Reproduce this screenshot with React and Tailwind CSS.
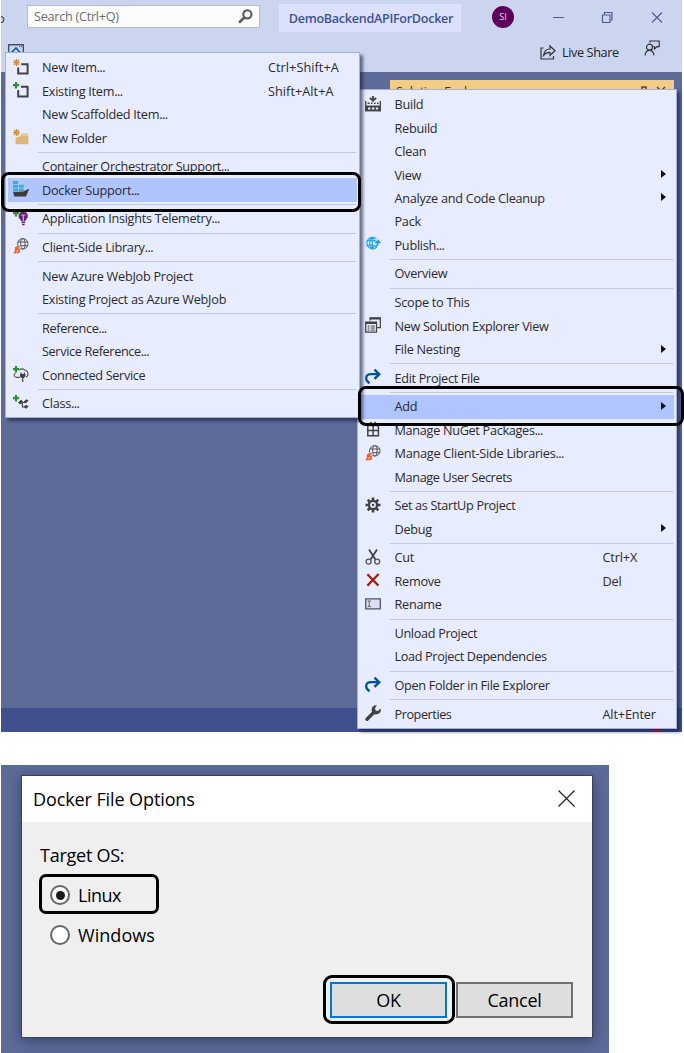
import React from "react";

const Svg = ({ children, className = "w-4 h-4" }) => (
  <svg viewBox="0 0 16 16" className={className} fill="none">{children}</svg>
);

const Spark = () => (
  <g>
    <path d="M3.5 0v7M0 3.5h7M1 1l5 5M6 1L1 6" stroke="#c98a3a" strokeWidth="1.1" />
    <circle cx="3.5" cy="3.5" r="2.1" fill="#d9922e" />
  </g>
);
const Plus = () => <path d="M3 0v6.4M-.2 3.2h6.4" stroke="#2f8f2f" strokeWidth="2.2" />;

const Globe = ({ stroke = "#555" }) => (
  <g stroke={stroke} strokeWidth="1">
    <circle cx="9.8" cy="5.8" r="5.2" />
    <ellipse cx="9.8" cy="5.8" rx="2.2" ry="5.2" />
    <path d="M4.8 4h10M4.8 7.7h10" />
  </g>
);

const icons = {
  newItem: <Svg><Spark /><path d="M8.2 5.2H14.6V14.6H5.2V8.4" stroke="#424242" strokeWidth="2" /></Svg>,
  existing: <Svg><Plus /><path d="M8 4.8H14.6V14.4H5.2V8" stroke="#424242" strokeWidth="2" /></Svg>,
  folder: <Svg><path d="M2.600 15.200V8.600L7 7.600 9 4.600h5.200l1.200 2v8.600z" fill="#dcb67a" /><path d="M9.500 6h5" stroke="#f2dfbe" strokeWidth="1" /><Spark /></Svg>,
  docker: (
    <Svg>
      <path d="M0 0h5v3H0zM0 3.700h5v3H0zM5.700 3.700h5v3h-5zM0 7.400h5v3H0zM5.700 7.400h5v2.500l-5 .5z" fill="#3aaed0" />
      <path d="M0 11.200L10 10.400 16.300 7.600 13 15.600H1.400z" fill="#3b3b3b" />
    </Svg>
  ),
  insights: (
    <Svg>
      <path d="M10.200 1.400a4.700 4.700 0 0 1 2.800 8.400l-.9 1.600H8.400l-.9-1.600a4.700 4.700 0 0 1 2.700-8.400z" fill="#68217a" />
      <path d="M8.600 12.600h3.400M9 14.600h2.600" stroke="#68217a" strokeWidth="1.300" />
      <path d="M10.300 11V6.400M8.400 5.500a1 1 0 1 1 1.900.9 1 1 0 1 1 1.900-.9" stroke="#e9d8ee" strokeWidth=".9" />
      <Plus />
    </Svg>
  ),
  clientLib: (
    <Svg>
      <Globe />
      <path d="M0 7h7.400v8.400H0z" fill="#e8ecff" />
      <path d="M.8 14.400l2 .1V9M6.800 8.500l-2.200.2-.1 2.300 1.700.5-.2 2.600-2 .4" stroke="#f0602a" strokeWidth="1.800" />
    </Svg>
  ),
  connected: (
    <Svg>
      <path d="M6.300 4.200A4 4 0 0 1 11.600 4a4 4 0 0 1 3.300 4 2.800 2.800 0 0 1-2 3M2.600 7C.8 7.500.4 11 3.500 11.400H7" stroke="#555" strokeWidth="1.100" />
      <path d="M8 6.400v2M11.400 6.400v2M9.700 11.500V16" stroke="#424242" strokeWidth="1.200" />
      <path d="M7 8h5.400v2.400L10.700 12H8.600L7 10.400z" fill="#424242" />
      <Plus />
    </Svg>
  ),
  classIcon: (
    <Svg>
      <path d="M5 7.600l3-2.800 2.200 1.600-3 3zM10.800 6.400l2.600-2.200 2.200 1.400-2.600 2.600zM10.600 11.800l2.600-2 2.400 1.600-2.600 2.400z" fill="#424242" />
      <path d="M8 8l4.600-.6M9.400 8v4h3" stroke="#424242" strokeWidth="1.200" />
      <Plus />
    </Svg>
  ),
  build: (
    <Svg>
      <path d="M8 0v4M4.800 1.900L8 4.700l3.200-2.800" stroke="#424242" strokeWidth="1.800" />
      <path d="M.7 5v10.400M15.300 5v10.400" stroke="#424242" strokeWidth="1.300" />
      <path d="M2.600 7.300h2M6 7.300h1.600M9 7.300h1.600M12 7.300h1.600" stroke="#424242" strokeWidth="1.500" />
      <path d="M1 9.500h14v5.900H1z" fill="#424242" />
      <path d="M3 11.400h2.400v2H3zM6.900 11.400h2.400v2H6.900zM10.800 11.400h2.400v2h-2.400z" fill="#e8ecff" />
    </Svg>
  ),
  publish: (
    <Svg>
      <g stroke="#1ba1e2" strokeWidth="1.100">
        <path d="M11.500 2.800A5.800 5.800 0 1 0 11.800 11.200M1.600 4.800h9.500M1.200 9.200h8.500" />
        <path d="M7.200 1.100c-3.400 3-3.400 9 0 11.700M7.200 1.100c1.800 1.500 2.500 3.300 2.600 5.200M7.200 12.800c1-.9 1.700-1.800 2.100-2.800M7.200 1v11.800" />
      </g>
      <path d="M9.800 10.800c2.200-.7 3.200-2.400 3.100-4.700" stroke="#1ba1e2" strokeWidth="1.700" />
      <path d="M9.600 7.200L13 3.200 16.200 7.200z" fill="#1ba1e2" />
    </Svg>
  ),
  windows: (
    <Svg>
      <path d="M5 3.500V.900h10.300v9.800H12" stroke="#424242" strokeWidth="1.200" />
      <path d="M5 1.600h10.300" stroke="#424242" strokeWidth="1.800" />
      <path d="M.7 5.200h10.800v9.900H.7z" stroke="#424242" strokeWidth="1.200" />
      <path d="M.7 6h10.800" stroke="#424242" strokeWidth="2" />
      <path d="M2.600 9h2M5.800 9h4M2.600 11h2M5.800 11h4M2.600 13h2M5.800 13h4" stroke="#424242" strokeWidth="1" />
    </Svg>
  ),
  arrow: (
    <Svg>
      <path d="M4.600 14.200C-.800 11 .600 5.200 6 5.200h7.500" stroke="#00539c" strokeWidth="2.200" />
      <path d="M9.500.600L14.300 5.200 9.500 9.800" stroke="#00539c" strokeWidth="2.400" />
    </Svg>
  ),
  nuget: (
    <Svg>
      <path d="M2.800 4.400h10.600v10.300H2.800zM8.100 4.400v10.300M2.800 9.400h10.600M8 4L5.300 1M8 4l2.700-3" stroke="#424242" strokeWidth="1.500" />
    </Svg>
  ),
  gear: (
    <Svg>
      <path d="M8 .5v15M.5 8h15M2.700 2.700l10.600 10.600M13.300 2.700L2.700 13.300" stroke="#424242" strokeWidth="2.600" />
      <circle cx="8" cy="8" r="4.100" fill="#e8ecff" stroke="#424242" strokeWidth="2.400" />
      <circle cx="8" cy="8" r="1.200" fill="#424242" />
    </Svg>
  ),
  cut: (
    <Svg>
      <path d="M4 .6l6.400 10M12 .6L5.600 10.600" stroke="#424242" strokeWidth="1.800" />
      <circle cx="3.600" cy="12.600" r="2.500" stroke="#555" strokeWidth="1.300" />
      <circle cx="12.200" cy="12.600" r="2.500" stroke="#555" strokeWidth="1.300" />
    </Svg>
  ),
  remove: <Svg><path d="M2.400 2.200l11 11.400M13.600 2L2.400 13.600" stroke="#a1260d" strokeWidth="2.300" /></Svg>,
  rename: (
    <Svg>
      <path d="M.7 2.800h14.600v10H.7z" fill="#dedcf2" stroke="#555" strokeWidth="1.300" />
      <path d="M2.600 5h3.200M2.600 10.600h3.200M4.200 5v5.600" stroke="#555" strokeWidth=".9" />
    </Svg>
  ),
  wrench: (
    <Svg>
      <path d="M2 14.200L9 7.300" stroke="#424242" strokeWidth="3.400" strokeLinecap="round" />
      <path d="M11.800.300a4.600 4.600 0 0 0-4.900 6.200 4.600 4.600 0 0 0 8.700-2.900L12.900 6 10.600 5.400 10 3.200z" fill="#424242" />
    </Svg>
  ),
};

const addMenu = [
  { t: "New Item...", i: "newItem", k: "Ctrl+Shift+A" },
  { t: "Existing Item...", i: "existing", k: "Shift+Alt+A" },
  { t: "New Scaffolded Item..." },
  { t: "New Folder", i: "folder" },
  null,
  { t: "Container Orchestrator Support...", c: "tracking-[-0.32px]" },
  { t: "Docker Support...", i: "docker", on: true },
  null,
  { t: "Application Insights Telemetry...", i: "insights", c: "tracking-[-0.28px]" },
  null,
  { t: "Client-Side Library...", i: "clientLib" },
  null,
  { t: "New Azure WebJob Project" },
  { t: "Existing Project as Azure WebJob" },
  null,
  { t: "Reference...", c: "tracking-[-0.36px]" },
  { t: "Service Reference...", c: "tracking-[-0.36px]" },
  { t: "Connected Service", i: "connected", c: "tracking-[-0.34px]" },
  null,
  { t: "Class...", i: "classIcon" },
];

const projectMenu = [
  { t: "Build", i: "build" },
  { t: "Rebuild" },
  { t: "Clean" },
  { t: "View", sub: true },
  { t: "Analyze and Code Cleanup", sub: true, c: "tracking-[-0.29px]" },
  { t: "Pack" },
  { t: "Publish...", i: "publish" },
  null,
  { t: "Overview" },
  null,
  { t: "Scope to This" },
  { t: "New Solution Explorer View", i: "windows", c: "tracking-[-0.33px]" },
  { t: "File Nesting", sub: true },
  null,
  { t: "Edit Project File", i: "arrow", c: "tracking-[-0.32px]" },
  null,
  { t: "Add", sub: true, on: true },
  { t: "Manage NuGet Packages...", i: "nuget", c: "tracking-[-0.31px]" },
  { t: "Manage Client-Side Libraries...", i: "clientLib" },
  { t: "Manage User Secrets", c: "tracking-[-0.37px]" },
  null,
  { t: "Set as StartUp Project", i: "gear", c: "tracking-[-0.33px]" },
  { t: "Debug", sub: true },
  null,
  { t: "Cut", i: "cut", k: "Ctrl+X" },
  { t: "Remove", i: "remove", k: "Del" },
  { t: "Rename", i: "rename" },
  null,
  { t: "Unload Project", c: "tracking-[-0.33px]" },
  { t: "Load Project Dependencies", c: "tracking-[-0.36px]" },
  null,
  { t: "Open Folder in File Explorer", i: "arrow", c: "tracking-[-0.32px]" },
  null,
  { t: "Properties", i: "wrench", k: "Alt+Enter", c: "tracking-[-0.45px]" },
];

function Label({ text, className = "tracking-[-0.26px]" }) {
  const dots = text.endsWith("...");
  return (
    <span className={`grow whitespace-nowrap ${className}`}>
      {dots ? text.slice(0, -3) : text}
      {dots && <span className="tracking-[-0.6px]">...</span>}
    </span>
  );
}

function Menu({ items, className, keyClass, iconClass }) {
  return (
    <div className={`absolute border border-[#a3b2dc] bg-[#e8ecff] px-[2px] pt-[3px] text-[12.7px] text-[#2b2b2b] shadow-[3px_3px_3px_rgba(20,25,60,0.6)] ${className}`}>
      {items.map((m, n) =>
        m ? (
          <div key={n} className={`flex h-[23.45px] items-center ${m.on ? "bg-[#b0c4ff]" : ""}`}>
            <span className={`ml-[5px] h-4 w-4 shrink-0 -translate-y-px ${iconClass}`}>{m.i && icons[m.i]}</span>
            <Label text={m.t} className={m.c} />
            {m.k && <span className={`shrink-0 whitespace-nowrap ${keyClass}`}>{m.k}</span>}
            {m.sub && (
              <svg viewBox="0 0 5 8" className="mr-[8px] h-2 w-[5px] -translate-y-px"><path d="M0 0L5 4 0 8z" fill="#111" /></svg>
            )}
          </div>
        ) : (
          <div key={n} className="flex h-[5.22px] items-center pl-[30px] pr-px">
            <div className="h-px grow bg-[#bcc8ea]" />
          </div>
        )
      )}
    </div>
  );
}

function Header() {
  return (
    <header className="h-[72px] bg-[#ccd5f0]">
      <div className="flex h-9 items-start">
        <span className="mt-2 w-[26px] overflow-hidden text-[13px] leading-5 text-[#333]"><span className="-ml-[4px]">o</span></span>
        <div className="mt-[5px] flex h-[23px] w-[233px] items-center justify-between border border-[#b4bbd0] bg-[#fcfcfc] pl-[6px] pr-[6px] text-[12.7px] tracking-[-0.28px] text-[#6d6d6d]">
          <span>Search (Ctrl+Q)</span>
          <svg viewBox="0 0 16 16" className="h-[15px] w-[15px]" fill="none" stroke="#555">
            <circle cx="10" cy="5.700" r="4.400" strokeWidth="2.200" /><path d="M6.500 9.200L1.200 14.500" strokeWidth="2.800" />
          </svg>
        </div>
        <div className="ml-[19px] mt-1 flex h-7 w-[182px] items-center justify-center bg-[#dbe1fa] pl-[2px] pt-[2px] text-[12.6px] font-semibold tracking-[-0.3px] text-[#3d5295]">DemoBackendAPIForDocker</div>
        <div className="ml-[31px] mt-[6px] flex h-[22px] w-[22px] items-center justify-center rounded-full bg-[#5c005c] text-[9px] text-[#e8d8ee]">SI</div>
        <svg viewBox="0 0 120 20" className="ml-[34px] mt-2 h-5 w-[120px]" fill="none" stroke="#4d5c8f">
          <path d="M5 9.500h11M104 4.500l10 10M114 4.500l-10 10" strokeWidth="1.100" />
          <path d="M54.500 7h7.500v7.500h-7.500zM56.500 7V4.500h7.500v7.500H62" strokeWidth="1.200" />
        </svg>
      </div>
      <div className="flex h-9 items-start text-[12.7px] tracking-[-0.4px] text-[#222]">
        <svg viewBox="0 0 16 16" className="ml-[7px] mt-2 h-4 w-4" fill="none">
          <path d="M.700.700h14.600v14.600H.700z" stroke="#4a4f60" strokeWidth="1.400" /><path d="M3 9l5-5 4.500 5M5 7.500V12h6V7.500" stroke="#0f5fa8" strokeWidth="1.600" /><path d="M11 2.700h1M13 2.700h1" stroke="#4a4f60" />
        </svg>
        <svg viewBox="0 0 16 16" className="ml-[516px] mt-2 h-4 w-4" fill="none" stroke="#333" strokeWidth="1.200">
          <path d="M3.500 4H1v11h12.500v-3M3.500 11.500C4 7 6.500 5 10 5V2l5 4.700-5 4.600V8.500C7.500 8.300 5.500 9 3.500 11.500z" />
        </svg>
        <span className="ml-[6px] mt-[6px] w-14 whitespace-nowrap leading-5">Live Share</span>
        <svg viewBox="0 0 16 16" className="ml-[26px] mt-1 h-4 w-4" fill="none" stroke="#333" strokeWidth="1.200">
          <path d="M6 2.500V1h9.200v5.700h-2.200l-2.500 2.300V6.700H9.500" /><circle cx="5.500" cy="7.200" r="3" /><path d="M1 15.500c.300-3.400 2-5.200 4.500-5.200S9.700 12.100 10 15.500" />
        </svg>
      </div>
    </header>
  );
}

const Callout = ({ className }) => <div className={`pointer-events-none absolute border-[3px] border-black ${className}`} />;

export default function App() {
  return (
    <div className="relative h-[1053px] w-[684px] overflow-hidden bg-white pl-px font-['Open_Sans','Noto_Sans',sans-serif]">
      <section className="flex h-[732px] w-[681px] flex-col bg-[#5d6b99]">
        <Header />
        <div className="flex grow flex-col">
          <div className="ml-[389px] mt-2 flex h-6 w-[284px] items-start justify-between bg-[#f5cc84] pl-[6px] pr-[7px] text-[12.7px] leading-[22px] tracking-[-0.45px] text-[#3d321d]">
            <span>Solution Explorer</span>
            <svg viewBox="0 0 28 12" className="mt-[6px] h-3 w-7" fill="none" stroke="#5a481f" strokeWidth="1.500"><path d="M3 8V1h4v7M1 8h8M18 1l8 8M26 1l-8 8" /></svg>
          </div>
        </div>
        <footer className="flex h-6 items-end justify-end bg-[#40508d] pr-5">
          <div className="h-[10px] w-[10px] rounded-full bg-[#ff0c0c]" />
        </footer>
      </section>

      <section className="mt-[33px] h-[288px] w-[608px] bg-[#5d6b99] pl-5 pt-[10px] text-black">
        <div className="flex h-[263px] w-[572px] flex-col border border-[#3b4257] bg-[#efefef] shadow-[0_3px_12px_rgba(20,25,60,0.5)]">
          <div className="flex h-[46px] items-center justify-between bg-white pl-[11px] pr-[17px] text-[18px] tracking-[-0.1px]">
            <span>Docker File Options</span>
            <svg viewBox="0 0 17 17" className="-mt-px h-[17px] w-[17px]" stroke="#222" strokeWidth="1.200"><path d="M.5.5l16 16M16.500.500l-16 16" /></svg>
          </div>
          <div className="flex grow flex-col pl-[18px] pr-[19px] text-[18px] tracking-[-0.25px]">
            <div className="mt-[19px] h-[28px] leading-7">Target OS:</div>
            <label className="mt-[12px] flex h-[28px] items-center gap-[8px] pl-[10px] tracking-[-0.5px]">
              <span className="flex h-5 w-5 items-center justify-center rounded-full border-2 border-[#666] bg-white"><span className="h-[9px] w-[9px] rounded-full bg-[#1c1c1c]" /></span>Linux
            </label>
            <label className="mt-[12px] flex h-[28px] items-center gap-[8px] pl-[10px] tracking-[0.05px]">
              <span className="h-5 w-5 rounded-full border-2 border-[#666] bg-white" />Windows
            </label>
            <div className="mt-[33px] flex justify-end gap-[9px]">
              <button className="h-9 w-[117px] border-2 border-[#0078d7] bg-[#dedede]">OK</button>
              <button className="h-9 w-[117px] border-2 border-[#707070] bg-[#dedede]">Cancel</button>
            </div>
          </div>
        </div>
      </section>

      <Menu items={projectMenu} className="left-[357px] top-[89px] h-[640px] w-[320px]" iconClass="mr-[13.5px]" keyClass="w-[71.5px] text-left tracking-[-0.15px]" />
      <Menu items={addMenu} className="left-[5px] top-[52px] h-[366px] w-[355px]" iconClass="mr-[13px]" keyClass="w-[89px] text-left tracking-[0.05px]" />

      <Callout className="left-[1px] top-[172px] h-[40px] w-[360px] rounded-[8px]" />
      <Callout className="left-[358px] top-[386px] h-[40px] w-[326px] rounded-[8px]" />
      <Callout className="left-[39px] top-[874px] h-[40px] w-[120px] rounded-[7px]" />
      <Callout className="left-[323px] top-[975px] h-[49px] w-[132px] rounded-[9px]" />
    </div>
  );
}
